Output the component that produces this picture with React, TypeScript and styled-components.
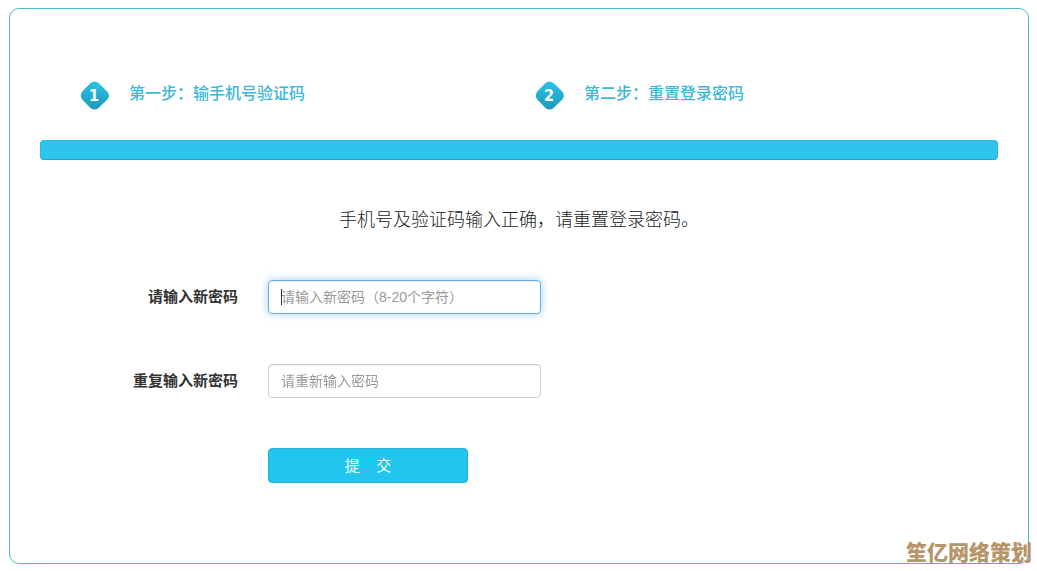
import React from "react";
import styled, { createGlobalStyle } from "styled-components";

const GlobalStyle = createGlobalStyle`
  *, *::before, *::after { box-sizing: border-box; }
  body {
    margin: 0;
    background: #fff;
    color: #333;
    font-family: "Liberation Sans", "Noto Sans CJK SC", sans-serif;
    font-size: 14px;
    line-height: 20px;
  }
`;

const Page = styled.div`
  position: relative;
  padding: 8px 8px 7px 9px;
`;

const Card = styled.main`
  padding: 70px 30px 80px;
  border: 1px solid #4cb9c4;
  border-radius: 10px;
`;

const Steps = styled.ol`
  display: grid;
  grid-template-columns: 1fr 1fr;
  margin: 0;
  padding: 0 8px 0 40px;
  list-style: none;
`;

const Step = styled.li`
  display: flex;
  align-items: flex-start;
  gap: 20px;
  height: 32px;
  color: #3db8d6;
  font-size: 16px;
  font-weight: 500;
  line-height: 30px;
`;

const Badge = styled.svg`
  flex: none;
  width: 29px;
  height: 32px;
`;

const BadgeNumber = styled.text`
  fill: #fff;
  font-family: "DejaVu Sans Condensed", "DejaVu Sans", sans-serif;
  font-size: 16px;
  font-weight: 700;
  text-anchor: middle;
`;

const ProgressBar = styled.div`
  height: 20px;
  margin-top: 29px;
  border: 1px solid #2cb9e0;
  border-bottom-color: #23a5c9;
  border-radius: 4px;
  background: #2dc4ee;
`;

const Message = styled.p`
  margin: 45px 0 0;
  color: #222;
  font-size: 18px;
  font-weight: 300;
  line-height: 30px;
  text-align: center;
`;

const Form = styled.form`
  display: grid;
  grid-template-columns: 198px minmax(0, 273px);
  column-gap: 30px;
  row-gap: 50px;
  align-items: center;
  margin-top: 45px;
`;

const Label = styled.label`
  font-size: 15px;
  font-weight: 700;
  line-height: 22px;
  text-align: right;
`;

const Field = styled.div`
  position: relative;

  &:has(input:focus:placeholder-shown)::after {
    content: "";
    position: absolute;
    top: 9px;
    left: 13px;
    width: 1px;
    height: 16px;
    background: #333;
  }
`;

const Input = styled.input`
  display: block;
  width: 100%;
  height: 34px;
  padding: 6px 12px;
  border: 1px solid #ccc;
  border-radius: 4px;
  outline: 0;
  background: #fff;
  box-shadow: inset 0 1px 1px rgba(0, 0, 0, 0.075);
  color: #555;
  font: inherit;

  &::placeholder { color: #999; opacity: 1; }

  &:focus {
    border-color: #66afe9;
    box-shadow: inset 0 1px 1px rgba(0, 0, 0, 0.075), 0 0 8px rgba(102, 175, 233, 0.6);
  }

  &:focus:placeholder-shown { caret-color: transparent; }
`;

const Submit = styled.button`
  grid-column: 2;
  width: 200px;
  height: 35px;
  padding: 0;
  border: 1px solid #27b2d4;
  border-radius: 4px;
  background: #22c5ee;
  color: #fff;
  font: inherit;
  font-size: 15px;
`;

const Watermark = styled.span`
  position: absolute;
  right: 5px;
  bottom: 3px;
  color: #b7946a;
  font-size: 21px;
  font-weight: 900;
  line-height: 30px;
`;

function StepItem({ number, children }: { number: number; children: React.ReactNode }) {
  const gradient = `badge-${number}`;
  return (
    <Step>
      <Badge viewBox="0 0 29 32" aria-hidden="true">
        <defs>
          <linearGradient id={gradient} x1="0" y1="0" x2="0" y2="1">
            <stop offset="0" stopColor="#2dc2e6" />
            <stop offset="1" stopColor="#1c98bd" />
          </linearGradient>
        </defs>
        <path
          d="M10.5 4Q14.5 1 18.5 4L27 12.2Q31 16.5 27 20.8L18.5 29Q14.5 32 10.5 29L2.5 20.8Q-1 16.5 2.5 12.2Z"
          fill={`url(#${gradient})`}
        />
        <BadgeNumber x="14" y="22">{number}</BadgeNumber>
      </Badge>
      {children}
    </Step>
  );
}

export default function App() {
  return (
    <Page>
      <GlobalStyle />
      <Card>
        <Steps>
          <StepItem number={1}>第一步：输手机号验证码</StepItem>
          <StepItem number={2}>第二步：重置登录密码</StepItem>
        </Steps>
        <ProgressBar />
        <Message>手机号及验证码输入正确，请重置登录密码。</Message>
        <Form onSubmit={(event) => event.preventDefault()}>
          <Label htmlFor="password">请输入新密码</Label>
          <Field>
            <Input id="password" type="password" placeholder="请输入新密码（8-20个字符）" autoFocus />
          </Field>
          <Label htmlFor="confirm">重复输入新密码</Label>
          <Field>
            <Input id="confirm" type="password" placeholder="请重新输入密码" />
          </Field>
          <Submit type="submit">提&nbsp;&nbsp;&nbsp;&nbsp;交</Submit>
        </Form>
      </Card>
      <Watermark>笙亿网络策划</Watermark>
    </Page>
  );
}
